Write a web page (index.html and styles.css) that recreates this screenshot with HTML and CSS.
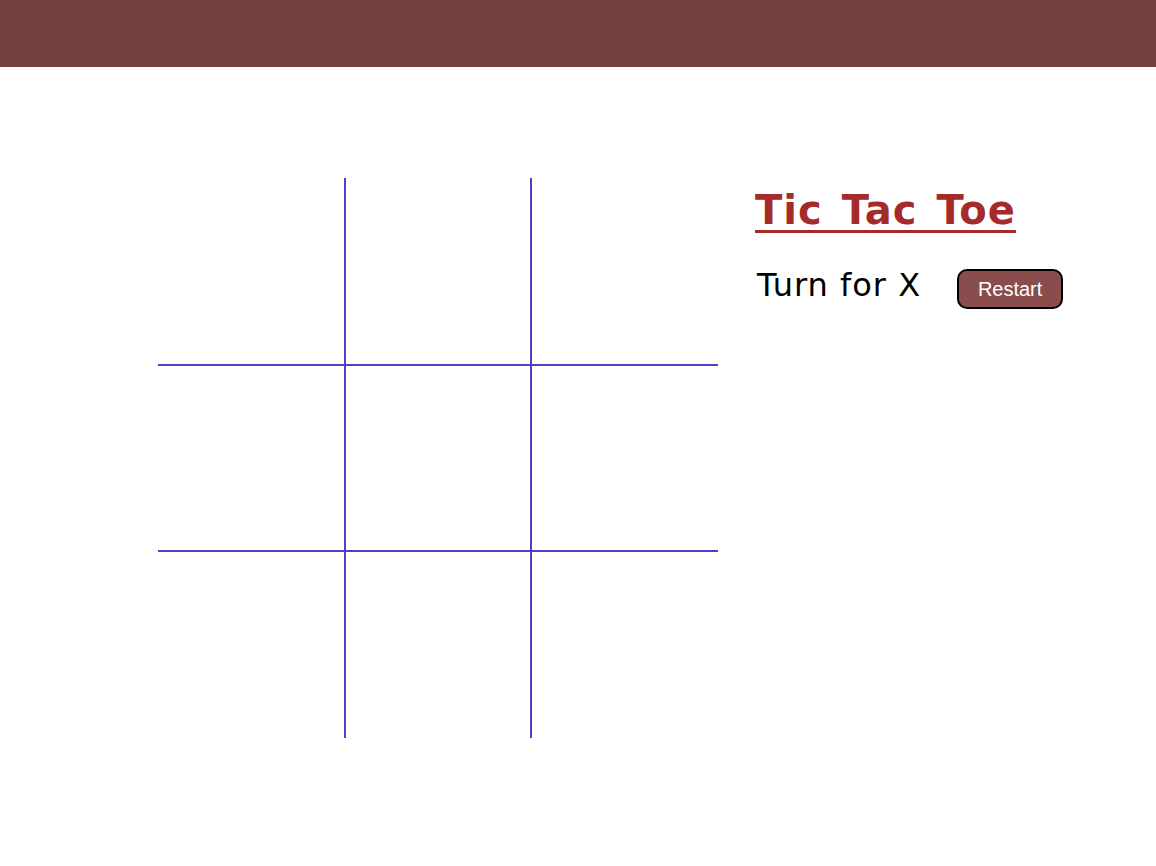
FILE: index.html
```html
<!DOCTYPE html>
<html lang="en">
<head>
<meta charset="utf-8">
<title>Tic Tac Toe</title>
<link rel="stylesheet" href="styles.css">
</head>
<body>
<header class="topbar"></header>
<main class="game">
  <div class="board">
    <div class="cell"></div>
    <div class="cell"></div>
    <div class="cell"></div>
    <div class="cell"></div>
    <div class="cell"></div>
    <div class="cell"></div>
    <div class="cell"></div>
    <div class="cell"></div>
    <div class="cell"></div>
  </div>
  <section class="panel">
    <h1 class="title">Tic Tac Toe</h1>
    <div class="status-row">
      <span class="status">Turn for X</span>
      <button class="restart" type="button">Restart</button>
    </div>
  </section>
</main>
</body>
</html>
```

FILE: styles.css
```css
html, body {
  margin: 0;
  padding: 0;
  background: #ffffff;
}

body {
  font-family: "DejaVu Sans", "Liberation Sans", sans-serif;
}

.topbar {
  height: 67px;
  background: #743f3f;
}

.game {
  display: flex;
  align-items: flex-start;
  gap: 37px;
  padding: 111px 0 0 158px;
}

.board {
  width: 560px;
  height: 560px;
  display: grid;
  grid-template-columns: repeat(3, 1fr);
  grid-template-rows: repeat(3, 1fr);
}

.cell {
  box-sizing: border-box;
}

.cell:nth-child(3n+1) { border-right: 1px solid #5040c8; }
.cell:nth-child(3n+2) { border-left: 1px solid #5040c8; border-right: 1px solid #5040c8; }
.cell:nth-child(3n) { border-left: 1px solid #5040c8; }
.cell:nth-child(-n+3) { border-bottom: 1px solid #5040c8; }
.cell:nth-child(n+4):nth-child(-n+6) { border-top: 1px solid #5040c8; border-bottom: 1px solid #5040c8; }
.cell:nth-child(n+7) { border-top: 1px solid #5040c8; }

.panel {
  padding-top: 8px;
}

.title {
  margin: 0;
  font-family: "DejaVu Sans", sans-serif;
  font-weight: bold;
  font-size: 40px;
  line-height: 48px;
  letter-spacing: 1px;
  word-spacing: 4px;
  color: #a52a2a;
  text-decoration: underline;
  text-decoration-thickness: 3px;
  text-underline-offset: 6px;
}

.status-row {
  display: flex;
  align-items: flex-start;
  margin-top: 32px;
  padding-left: 2px;
}

.status {
  font-family: "DejaVu Sans", sans-serif;
  font-size: 32px;
  letter-spacing: 1px;
  color: #000000;
}

.restart {
  margin-left: 36px;
  margin-top: 3px;
  width: 106px;
  height: 40px;
  box-sizing: border-box;
  background: #8a4d4d;
  border: 2px solid #000000;
  border-radius: 10px;
  color: #ffffff;
  font-family: "Liberation Sans", Arial, sans-serif;
  font-size: 20px;
  padding: 0;
  cursor: pointer;
}
```
